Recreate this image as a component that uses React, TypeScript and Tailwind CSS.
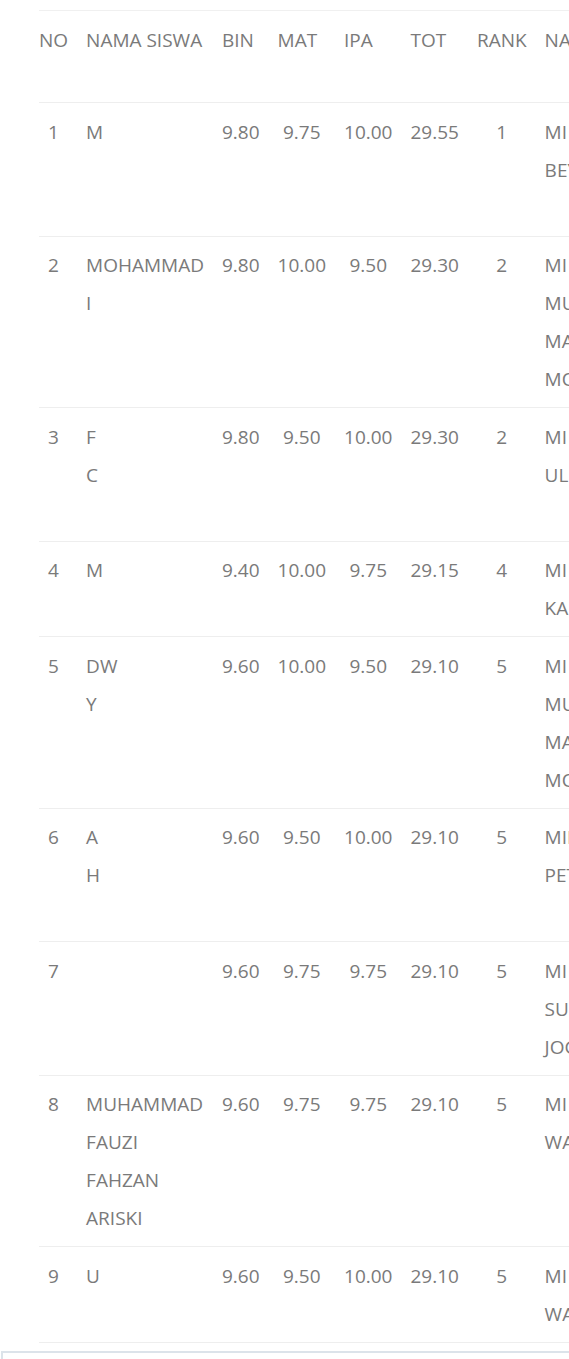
type Row = {
  no: number;
  name: string[];
  bin: string;
  mat: string;
  ipa: string;
  tot: string;
  rank: number;
  school: string[];
};

const rows: Row[] = [
  { no: 1, name: ["M", "", ""], bin: "9.80", mat: "9.75", ipa: "10.00", tot: "29.55", rank: 1, school: ["MI", "BEY"] },
  { no: 2, name: ["MOHAMMAD", "I"], bin: "9.80", mat: "10.00", ipa: "9.50", tot: "29.30", rank: 2, school: ["MI", "MU", "MA", "MO"] },
  { no: 3, name: ["F", "C", ""], bin: "9.80", mat: "9.50", ipa: "10.00", tot: "29.30", rank: 2, school: ["MI", "UL"] },
  { no: 4, name: ["M", ""], bin: "9.40", mat: "10.00", ipa: "9.75", tot: "29.15", rank: 4, school: ["MI", "KA"] },
  { no: 5, name: ["DW", "Y"], bin: "9.60", mat: "10.00", ipa: "9.50", tot: "29.10", rank: 5, school: ["MI", "MU", "MA", "MO"] },
  { no: 6, name: ["A", "H", ""], bin: "9.60", mat: "9.50", ipa: "10.00", tot: "29.10", rank: 5, school: ["MII", "PET"] },
  { no: 7, name: ["", "", ""], bin: "9.60", mat: "9.75", ipa: "9.75", tot: "29.10", rank: 5, school: ["MI", "SU", "JOG"] },
  { no: 8, name: ["MUHAMMAD", "FAUZI", "FAHZAN", "ARISKI"], bin: "9.60", mat: "9.75", ipa: "9.75", tot: "29.10", rank: 5, school: ["MI", "WA"] },
  { no: 9, name: ["U", ""], bin: "9.60", mat: "9.50", ipa: "10.00", tot: "29.10", rank: 5, school: ["MI", "WA"] },
];

const headers = ["NO", "NAMA SISWA", "BIN", "MAT", "IPA", "TOT", "RANK", "NAMA SEKOLAH"];

function Lines({ lines }: { lines: string[] }) {
  return (
    <>
      {lines.map((line, i) => (
        <div key={i} className="whitespace-nowrap">
          {line || "\u00a0"}
        </div>
      ))}
    </>
  );
}

export default function App() {
  const cell = "pr-[18px] pl-0 pt-[9.5px] pb-[9px] align-top";

  return (
    <div
      className="min-h-[1359px] w-[569px] overflow-hidden bg-white text-[19px] leading-[38px] text-[#7a7a7a]"
      style={{ fontFamily: '"Open Sans", "Noto Sans", sans-serif' }}
    >
      <div className="pl-[39px] pt-[10px]">
        <table className="w-0 border-collapse border-t border-[#f0f0f0]">
          <thead>
            <tr className="border-b border-[#eeeeee]">
              {headers.map((h) => (
                <th
                  key={h}
                  className="h-[92px] whitespace-nowrap pr-[18px] pl-0 pt-[10px] text-left align-top font-normal"
                >
                  {h}
                </th>
              ))}
            </tr>
          </thead>
          <tbody>
            {rows.map((r) => (
              <tr key={r.no} className="border-b border-[#eeeeee]">
                <td className={`${cell} text-center`}>{r.no}</td>
                <td className={`${cell} text-left`}>
                  <Lines lines={r.name} />
                </td>
                <td className={`${cell} text-center`}>{r.bin}</td>
                <td className={`${cell} text-center`}>{r.mat}</td>
                <td className={`${cell} text-center`}>{r.ipa}</td>
                <td className={`${cell} text-center`}>{r.tot}</td>
                <td className={`${cell} text-center`}>{r.rank}</td>
                <td className={`${cell} text-left`}>
                  <Lines lines={r.school} />
                </td>
              </tr>
            ))}
          </tbody>
        </table>
      </div>
      <div className="ml-[1px] mt-[8px] h-[40px] w-[700px] border-l-2 border-t-2 border-[#dce3ea]" />
    </div>
  );
}
